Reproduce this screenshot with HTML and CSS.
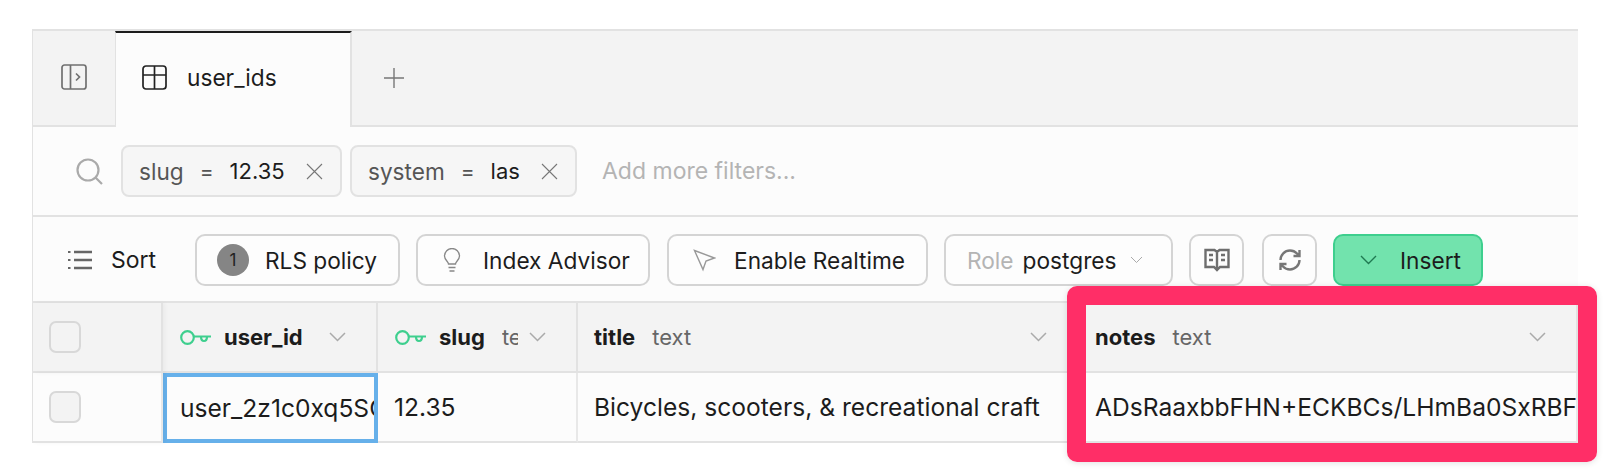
FILE: index.html
```html
<!DOCTYPE html>
<html lang="en">
<head>
    <meta charset="UTF-8">
    <title>user_ids</title>
    <link rel="stylesheet" href="styles.css">
</head>
<body>
    <div class="editor">
        <div class="tabs">
            <div class="side-toggle">
                <svg width="26" height="26" viewBox="0 0 26 26" fill="none" stroke="#707070" stroke-width="1.7"><rect x="1" y="1" width="24" height="24" rx="2.500"/><path d="M9.500 1v24M15 9.500l3.500 3.500-3.500 3.500"/></svg>
            </div>
            <div class="tab">
                <svg width="25" height="25" viewBox="0 0 25 25" fill="none" stroke="#222" stroke-width="1.700"><rect x="1" y="1" width="23" height="23" rx="3"/><path d="M1 10h23M12.500 1v23"/></svg>
                <span>user_ids</span>
            </div>
            <div class="tab-add">
                <svg width="20" height="20" viewBox="0 0 20 20" stroke="#777" stroke-width="1.400"><path d="M10 0v20M0 10h20"/></svg>
            </div>
        </div>

        <div class="filters">
            <svg class="search" width="27" height="27" viewBox="0 0 27 27" fill="none" stroke="#aaa" stroke-width="2.200"><circle cx="12" cy="12" r="10.500"/><path d="M19.500 19.500l6.500 6.500"/></svg>
            <div class="chip chip-slug">
                <span class="k">slug</span><span class="eq">=</span><span class="v">12.35</span>
                <svg class="x" width="17" height="17" viewBox="0 0 17 17" stroke="#777" stroke-width="1.100"><path d="M1 1l15 15M16 1L1 16"/></svg>
            </div>
            <div class="chip chip-system">
                <span class="k">system</span><span class="eq">=</span><span class="v">las</span>
                <svg class="x" width="17" height="17" viewBox="0 0 17 17" stroke="#777" stroke-width="1.100"><path d="M1 1l15 15M16 1L1 16"/></svg>
            </div>
            <span class="more">Add more filters...</span>
        </div>

        <div class="toolbar">
            <div class="sort">
                <svg width="24" height="20" viewBox="0 0 24 20" stroke="#666" stroke-width="2.400"><path d="M6 2h18M6 10h18M6 18h18"/><path d="M0 2h2.500M0 10h2.500M0 18h2.500" stroke-width="1.800"/></svg>
                <span>Sort</span>
            </div>
            <div class="btn rls"><span class="badge">1</span>RLS policy</div>
            <div class="btn advisor">
                <svg width="18" height="24" viewBox="0 0 18 24" fill="none" stroke="#888" stroke-width="1.300"><path d="M5.500 16c0-2.500-4-4-4-8a7.500 7.500 0 0 1 15 0c0 4-4 5.500-4 8zM5.500 19.500h7M6.500 23h5"/></svg>
                Index Advisor
            </div>
            <div class="btn realtime">
                <svg width="23" height="23" viewBox="0 0 23 23" fill="none" stroke="#999" stroke-width="1.400"><path d="M1.500 1.500l20 7.500-8.500 3-3 8.500z"/></svg>
                Enable Realtime
            </div>
            <div class="btn role">
                <span class="role-label">Role</span><span>postgres</span>
                <svg width="13" height="8" viewBox="0 0 13 8" fill="none" stroke="#aaa" stroke-width="1"><path d="M1 1l5.500 5.500L12 1"/></svg>
            </div>
            <div class="btn square book">
                <svg width="26" height="24" viewBox="0 0 26 24" fill="none" stroke="#6e6e6e" stroke-width="2.400"><path d="M1.500 2h9L13 4l2.500-2h9v17H16l-3 3-3-3H1.500zM13 4v18M5 7h4M5 12h4M17 7h4M17 12h4"/></svg>
            </div>
            <div class="btn square">
                <svg width="24" height="24" viewBox="0 0 24 24" fill="none" stroke="#777" stroke-width="2.400"><path d="M2.500 12a9.500 9.500 0 0 1 9.500-9.500 9.750 9.750 0 0 1 7 3L21.500 8M21.500 2V8h-6M21.500 12a9.500 9.500 0 0 1-9.500 9.500 9.750 9.750 0 0 1-7-3L2.500 16M8.500 16h-6v6"/></svg>
            </div>
            <div class="btn insert">
                <svg width="17" height="10" viewBox="0 0 17 10" fill="none" stroke="#1f7a52" stroke-width="1.400"><path d="M1 1l7.500 7.500L16 1"/></svg>
                Insert
            </div>
        </div>

        <div class="grid">
            <div class="cell head check-col"><span class="checkbox"></span></div>
            <div class="cell head">
                <svg class="key" width="31" height="15" viewBox="0 0 31 15" fill="none" stroke="#3ecf8e" stroke-width="2.200"><circle cx="7.500" cy="7.500" r="6.300"/><path d="M13.800 6.500H31M21 6.500c0 6 6 6 6 0"/></svg>
                <b>user_id</b>
                <svg class="chev" width="17" height="10" viewBox="0 0 17 10" fill="none" stroke="#aaa" stroke-width="1.500"><path d="M1 1l7.500 7.500L16 1"/></svg>
            </div>
            <div class="cell head">
                <svg class="key" width="31" height="15" viewBox="0 0 31 15" fill="none" stroke="#3ecf8e" stroke-width="2.200"><circle cx="7.500" cy="7.500" r="6.300"/><path d="M13.800 6.500H31M21 6.500c0 6 6 6 6 0"/></svg>
                <b>slug</b><span class="type clip">text</span>
                <svg class="chev" width="17" height="10" viewBox="0 0 17 10" fill="none" stroke="#aaa" stroke-width="1.500"><path d="M1 1l7.500 7.500L16 1"/></svg>
            </div>
            <div class="cell head">
                <b>title</b><span class="type">text</span>
                <svg class="chev" width="17" height="10" viewBox="0 0 17 10" fill="none" stroke="#aaa" stroke-width="1.500"><path d="M1 1l7.500 7.500L16 1"/></svg>
            </div>
            <div class="cell head">
                <b>notes</b><span class="type">text</span>
                <svg class="chev" width="17" height="10" viewBox="0 0 17 10" fill="none" stroke="#aaa" stroke-width="1.500"><path d="M1 1l7.500 7.500L16 1"/></svg>
            </div>

            <div class="cell check-col"><span class="checkbox"></span></div>
            <div class="cell selected"><span class="value">user_2z1c0xq5SC</span></div>
            <div class="cell"><span class="value">12.35</span></div>
            <div class="cell"><span class="value">Bicycles, scooters, &amp; recreational craft</span></div>
            <div class="cell"><span class="value">ADsRaaxbbFHN+ECKBCs/LHmBa0SxRBF</span></div>
        </div>

        <div class="highlight"></div>
    </div>
</body>
</html>
```

FILE: styles.css
```css
* { margin: 0; padding: 0; box-sizing: border-box; }
html { height: 100%; }
html, body { background: #fff; }
body {
    height: 472px;
    font-family: "Inter", "Liberation Sans", sans-serif;
    font-size: 22.7px;
    color: #1c1c1c;
    padding: 29px 32px 0;
}
.editor {
    position: relative;
    width: 1546px;
    background: #fcfcfc;
    border-left: 1px solid #e2e2e2;
}

/* tabs */
.tabs {
    display: flex;
    height: 98px;
    background: #f3f3f3;
    border-top: 2px solid #e2e2e2;
    border-bottom: 2px solid #e2e2e2;
}
.side-toggle {
    width: 82px;
    display: flex;
    align-items: center;
    justify-content: center;
    padding-bottom: 3px;
}
.tab {
    width: 237px;
    margin-bottom: -2px;
    display: flex;
    align-items: center;
    gap: 20px;
    padding: 0 0 5px 26px;
    background: #fcfcfc;
    border-top: 2px solid #1c1c1c;
    border-left: 1px solid #e2e2e2;
    border-right: 2px solid #e2e2e2;
}
.tab-add {
    width: 84px;
    display: flex;
    align-items: center;
    justify-content: center;
}

/* filters */
.filters {
    display: flex;
    align-items: center;
    height: 90px;
    padding-left: 43px;
    border-bottom: 2px solid #e2e2e2;
    font-size: 23px;
}
.search { margin-right: 18px; }
.chip {
    display: flex;
    align-items: center;
    height: 52px;
    padding: 0 17px 0 16px;
    margin-right: 8px;
    background: #f6f6f6;
    border: 2px solid #e2e2e2;
    border-radius: 8px;
    color: #555;
    font-size: 22.6px;
}
.chip-slug { width: 221px; }
.chip-system { width: 227px; }
.eq { margin: 0 16px; font-size: 21px; }
.v { color: #1c1c1c; font-size: 22px; }
.x { margin-left: auto; }
.more { margin-left: 17px; color: #b4b4b4; }

/* toolbar */
.toolbar {
    display: flex;
    align-items: center;
    height: 85px;
    padding-left: 35px;
}
.sort {
    display: flex;
    align-items: center;
    gap: 19px;
    width: 127px;
    font-size: 23px;
}
.btn {
    display: flex;
    align-items: center;
    height: 52px;
    margin-right: 16px;
    padding-top: 1px;
    background: #fdfdfd;
    border: 2px solid #d4d4d4;
    border-radius: 10px;
}
.rls { width: 205px; padding-left: 20px; gap: 16px; }
.badge {
    width: 32px;
    height: 32px;
    border-radius: 50%;
    background: #858585;
    display: flex;
    align-items: center;
    justify-content: center;
    font-size: 17px;
    color: #222;
}
.advisor { width: 234px; margin-right: 17px; padding-left: 25px; gap: 22px; }
.realtime { width: 261px; padding-left: 24px; gap: 18px; }
.role { width: 229px; padding-left: 21px; gap: 9px; }
.role svg { margin-left: 4px; }
.role-label { color: #b4b4b4; }
.square { width: 55px; justify-content: center; }
.book { margin-right: 18px; }
.insert {
    width: 150px;
    margin-right: 0;
    padding-left: 25px;
    gap: 23px;
    background: #72e3ad;
    border-color: #3ecf8e;
}

/* table */
.grid {
    display: grid;
    grid-template-columns: 130px 215px 200px 501px 499px;
    grid-template-rows: 70px 70px;
    background: #fcfcfc;
    border-top: 2px solid #e2e2e2;
    margin-top: -1px;
}
.cell {
    display: flex;
    align-items: center;
    min-width: 0;
    padding-left: 16px;
    border-right: 2px solid #e8e8e8;
    border-bottom: 2px solid #e2e2e2;
    overflow: hidden;
    white-space: nowrap;
    font-size: 24.6px;
}
.head {
    background: #f3f3f3;
    border-right-color: #e2e2e2;
    position: relative;
    font-size: 22px;
}
.head b { font-weight: 700; }
.key { margin-right: 13px; margin-left: 1px; flex: none; }
.chev { position: absolute; right: 30px; top: 29px; }
.type { margin-left: 17px; color: #666; }
.clip { width: 16px; overflow: hidden; flex: none; }
.check-col { box-shadow: 2px 0 4px rgba(0, 0, 0, .04); z-index: 1; }
.checkbox {
    width: 32px;
    height: 32px;
    background: #f3f3f3;
    border: 2px solid #d8d8d8;
    border-radius: 7px;
}
.selected {
    border: 4px solid #66b0ea;
    padding-left: 13px;
}
.value { overflow: hidden; }

/* annotation over the notes column */
.highlight {
    position: absolute;
    left: 1034px;
    top: 257px;
    width: 530px;
    height: 176px;
    border: 19px solid #ff2e67;
    border-radius: 10px;
    pointer-events: none;
    box-shadow: 0 1px 6px rgba(0, 0, 0, .12);
}
```
